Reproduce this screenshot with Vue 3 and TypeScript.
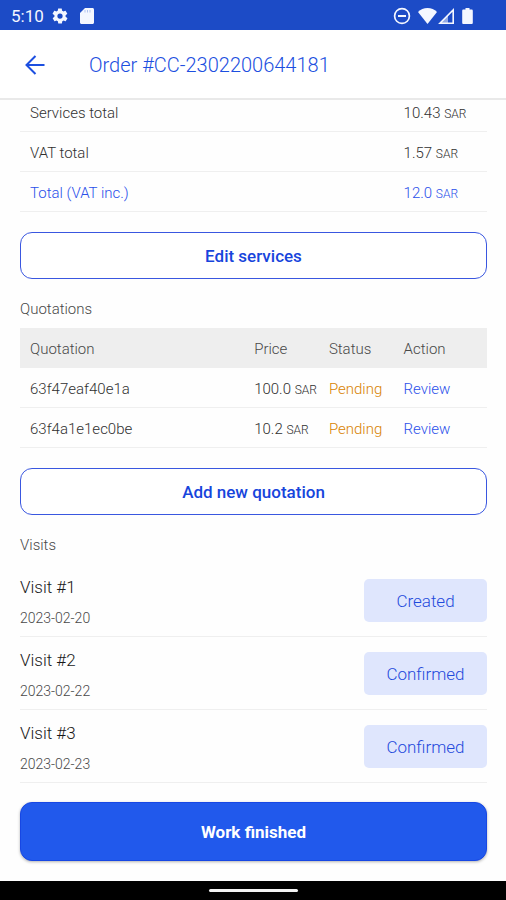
<script setup lang="ts">
interface SummaryLine {
  label: string
  amount: string
  highlight?: boolean
}

interface Quotation {
  id: string
  price: string
  status: string
}

interface Visit {
  title: string
  date: string
  state: string
}

const currency = 'SAR'

const summary: SummaryLine[] = [
  { label: 'Services total', amount: '10.43' },
  { label: 'VAT total', amount: '1.57' },
  { label: 'Total (VAT inc.)', amount: '12.0', highlight: true },
]

const quotations: Quotation[] = [
  { id: '63f47eaf40e1a', price: '100.0', status: 'Pending' },
  { id: '63f4a1e1ec0be', price: '10.2', status: 'Pending' },
]

const visits: Visit[] = [
  { title: 'Visit #1', date: '2023-02-20', state: 'Created' },
  { title: 'Visit #2', date: '2023-02-22', state: 'Confirmed' },
  { title: 'Visit #3', date: '2023-02-23', state: 'Confirmed' },
]
</script>

<template>
  <div class="screen">
    <div class="status-bar">
      <div class="status-group left">
        <span class="clock">5:10</span>
        <svg class="gear" width="18" height="18" viewBox="0 0 24 24" fill="currentColor" aria-hidden="true">
          <path d="M19.4 13c0-.3.1-.6.1-1s0-.7-.1-1l2.1-1.6c.2-.2.2-.4.1-.6l-2-3.500c-.1-.2-.4-.3-.6-.2l-2.500 1c-.5-.4-1.100-.7-1.700-1l-.4-2.600c0-.2-.2-.4-.5-.4h-4c-.2 0-.4.2-.5.4l-.4 2.600c-.6.3-1.200.6-1.700 1l-2.500-1c-.2-.1-.5 0-.6.2l-2 3.500c-.1.2-.1.5.1.6L4.600 11c0 .3-.1.7-.1 1s0 .7.1 1l-2.100 1.600c-.2.2-.2.4-.1.6l2 3.500c.1.2.4.3.6.2l2.500-1c.5.4 1.100.7 1.700 1l.4 2.600c0 .2.2.4.5.4h4c.2 0 .4-.2.5-.4l.4-2.600c.6-.3 1.200-.6 1.700-1l2.500 1c.2.1.5 0 .6-.2l2-3.500c.1-.2.1-.5-.1-.6L19.400 13zM12 15.500A3.500 3.500 0 1 1 12 8.500a3.500 3.500 0 0 1 0 7z" />
        </svg>
        <svg class="card" width="14" height="16" viewBox="0 0 14 16" aria-hidden="true">
          <path d="M5 0h7.500C13.300 0 14 .7 14 1.500v13c0 .8-.7 1.500-1.500 1.500h-11C.7 16 0 15.300 0 14.500V5z" fill="currentColor" />
          <path d="M5 2v2.500M7.500 2v2.500M10 2v2.500" stroke="#1c4bc6" stroke-opacity=".3" />
        </svg>
      </div>
      <div class="status-group right">
        <svg width="18" height="18" viewBox="0 0 18 18" fill="none" stroke="currentColor" stroke-width="1.700" aria-hidden="true">
          <circle cx="9" cy="9" r="7.400" />
          <path d="M5 9h8" stroke-width="2" />
        </svg>
        <svg class="wifi" width="19" height="16" viewBox="0 0 19 16" fill="currentColor" aria-hidden="true">
          <path d="M9.500 16 0 4C2.500 1.400 5.800 0 9.500 0S16.500 1.400 19 4z" />
        </svg>
        <svg class="signal" width="16" height="16" viewBox="0 0 16 16" aria-hidden="true">
          <path d="M15.200 2v13.200H2z" fill="none" stroke="currentColor" stroke-width="1.600" />
          <path d="M10 7v9H1z" fill="currentColor" fill-opacity=".55" />
        </svg>
        <svg class="battery" width="11" height="16" viewBox="0 0 11 16" fill="currentColor" aria-hidden="true">
          <path d="M3.500 0h4v1.600h2c.8 0 1.300.5 1.300 1.300v11.800c0 .8-.5 1.300-1.300 1.300h-8c-.8 0-1.300-.5-1.300-1.300V2.900c0-.8.500-1.300 1.300-1.300h2z" />
        </svg>
      </div>
    </div>

    <header class="app-bar">
      <button class="back" type="button" aria-label="Back">
        <svg width="20" height="20" viewBox="0 0 20 20" fill="none" stroke="currentColor" stroke-width="2" aria-hidden="true">
          <path d="M19.500 10H2M10.500 1 1.500 10l9 9" />
        </svg>
      </button>
      <h1>Order #CC-2302200644181</h1>
    </header>

    <main class="content">
      <table class="grid summary">
        <colgroup>
          <col class="wide" />
          <col />
        </colgroup>
        <tbody>
          <tr v-for="line in summary" :key="line.label" :class="{ highlight: line.highlight }">
            <th scope="row">{{ line.label }}</th>
            <td>{{ line.amount }} <small>{{ currency }}</small></td>
          </tr>
        </tbody>
      </table>

      <button class="outlined" type="button">Edit services</button>

      <h2>Quotations</h2>
      <table class="grid quotations">
        <colgroup>
          <col class="name" />
          <col class="mid" />
          <col class="mid" />
          <col />
        </colgroup>
        <thead>
          <tr>
            <th scope="col">Quotation</th>
            <th scope="col">Price</th>
            <th scope="col">Status</th>
            <th scope="col">Action</th>
          </tr>
        </thead>
        <tbody>
          <tr v-for="q in quotations" :key="q.id">
            <td>{{ q.id }}</td>
            <td>{{ q.price }} <small>{{ currency }}</small></td>
            <td class="pending">{{ q.status }}</td>
            <td><a href="#">Review</a></td>
          </tr>
        </tbody>
      </table>

      <button class="outlined" type="button">Add new quotation</button>

      <h2>Visits</h2>
      <ul class="visits">
        <li v-for="visit in visits" :key="visit.title">
          <div class="visit-info">
            <h3>{{ visit.title }}</h3>
            <time :datetime="visit.date">{{ visit.date }}</time>
          </div>
          <span class="badge">{{ visit.state }}</span>
        </li>
      </ul>

      <button class="filled" type="button">Work finished</button>
    </main>

    <div class="nav-bar"><span class="handle"></span></div>
  </div>
</template>

<style>
body {
  margin: 0;
  background: #fefefe;
}
</style>

<style scoped>
.screen,
.screen * {
  box-sizing: border-box;
}

.screen {
  display: flex;
  flex-direction: column;
  min-height: 100vh;
  background: #fefefe;
  color: #303030;
  font-family: Roboto, "Liberation Sans", sans-serif;
  font-size: 15px;
  font-weight: 300;
  line-height: 20px;
}

button {
  font-family: inherit;
  cursor: pointer;
}

.status-bar {
  display: flex;
  justify-content: space-between;
  align-items: center;
  height: 30px;
  padding: 1px 33px 0 11px;
  background: #1c4bc6;
  color: #f4f7ff;
}

.status-group {
  display: flex;
  align-items: center;
}

.clock {
  font-size: 17px;
  font-weight: 400;
}

.gear {
  margin-left: 7px;
}

.card {
  margin-left: 11px;
}

.wifi {
  margin-left: 7px;
}

.signal {
  margin-left: 1px;
}

.battery {
  margin-left: 8px;
}

.app-bar {
  display: flex;
  align-items: center;
  gap: 44px;
  height: 70px;
  padding: 2px 25px 0;
  border-bottom: 2px solid #e9e9e9;
  background: #fff;
  color: #1c4fe0;
}

.back {
  display: flex;
  padding: 0;
  border: 0;
  background: none;
  color: inherit;
}

h1 {
  margin: 0;
  font-size: 20px;
  font-weight: 300;
  line-height: 24px;
}

.content {
  flex: 1;
  padding: 0 19px 20px 20px;
  overflow: hidden;
}

.grid {
  width: 100%;
  table-layout: fixed;
  border-collapse: separate;
  border-spacing: 0;
}

.summary {
  margin-top: -8px;
}

.wide {
  width: 80%;
}

.name {
  width: 48%;
}

.mid {
  width: 16%;
}

th,
td {
  height: 40px;
  padding: 3px 0 0 10px;
  border-bottom: 1px solid #efefef;
  font-weight: inherit;
  text-align: left;
  white-space: nowrap;
}

thead th {
  border-color: #eee;
  background: #eee;
  color: #484848;
}

small {
  font-size: 12px;
  line-height: 1;
}

.highlight,
a {
  color: #2a50ea;
}

a {
  text-decoration: none;
}

.pending {
  color: #d98200;
}

h2 {
  margin: 20px 0 9px;
  color: #484848;
  font-size: 15px;
  font-weight: 300;
  line-height: 20px;
}

.outlined,
.filled {
  display: block;
  width: 100%;
  border-radius: 12px;
  font-size: 17px;
  font-weight: 500;
}

.outlined {
  height: 47px;
  margin-top: 20px;
  border: 1px solid #3a57e0;
  background: #fff;
  color: #1745dc;
}

.filled {
  height: 59px;
  margin-top: 19px;
  border: 1px solid #1747e4;
  background: #2159ec;
  box-shadow: 0 1px 3px rgba(0, 0, 0, 0.3);
  color: #fff;
  font-weight: 700;
}

.visits {
  margin: 0;
  padding: 0;
  list-style: none;
}

.visits li {
  display: flex;
  justify-content: space-between;
  align-items: center;
  height: 73px;
  border-bottom: 1px solid #efefef;
}

.visit-info {
  display: flex;
  flex-direction: column;
  gap: 11px;
  padding-top: 4px;
}

h3 {
  margin: 0;
  color: #181818;
  font-size: 17px;
  font-weight: 300;
  line-height: 20px;
}

time {
  color: #484848;
  font-size: 14px;
}

.badge {
  width: 123px;
  padding-top: 1px;
  border-radius: 5px;
  background: #dfe6fd;
  color: #1f4bdc;
  font-size: 17px;
  line-height: 42px;
  text-align: center;
}

.nav-bar {
  display: flex;
  justify-content: center;
  align-items: center;
  height: 19px;
  background: #000;
}

.handle {
  width: 89px;
  height: 3px;
  border-radius: 2px;
  background: #f2f2f2;
}
</style>
